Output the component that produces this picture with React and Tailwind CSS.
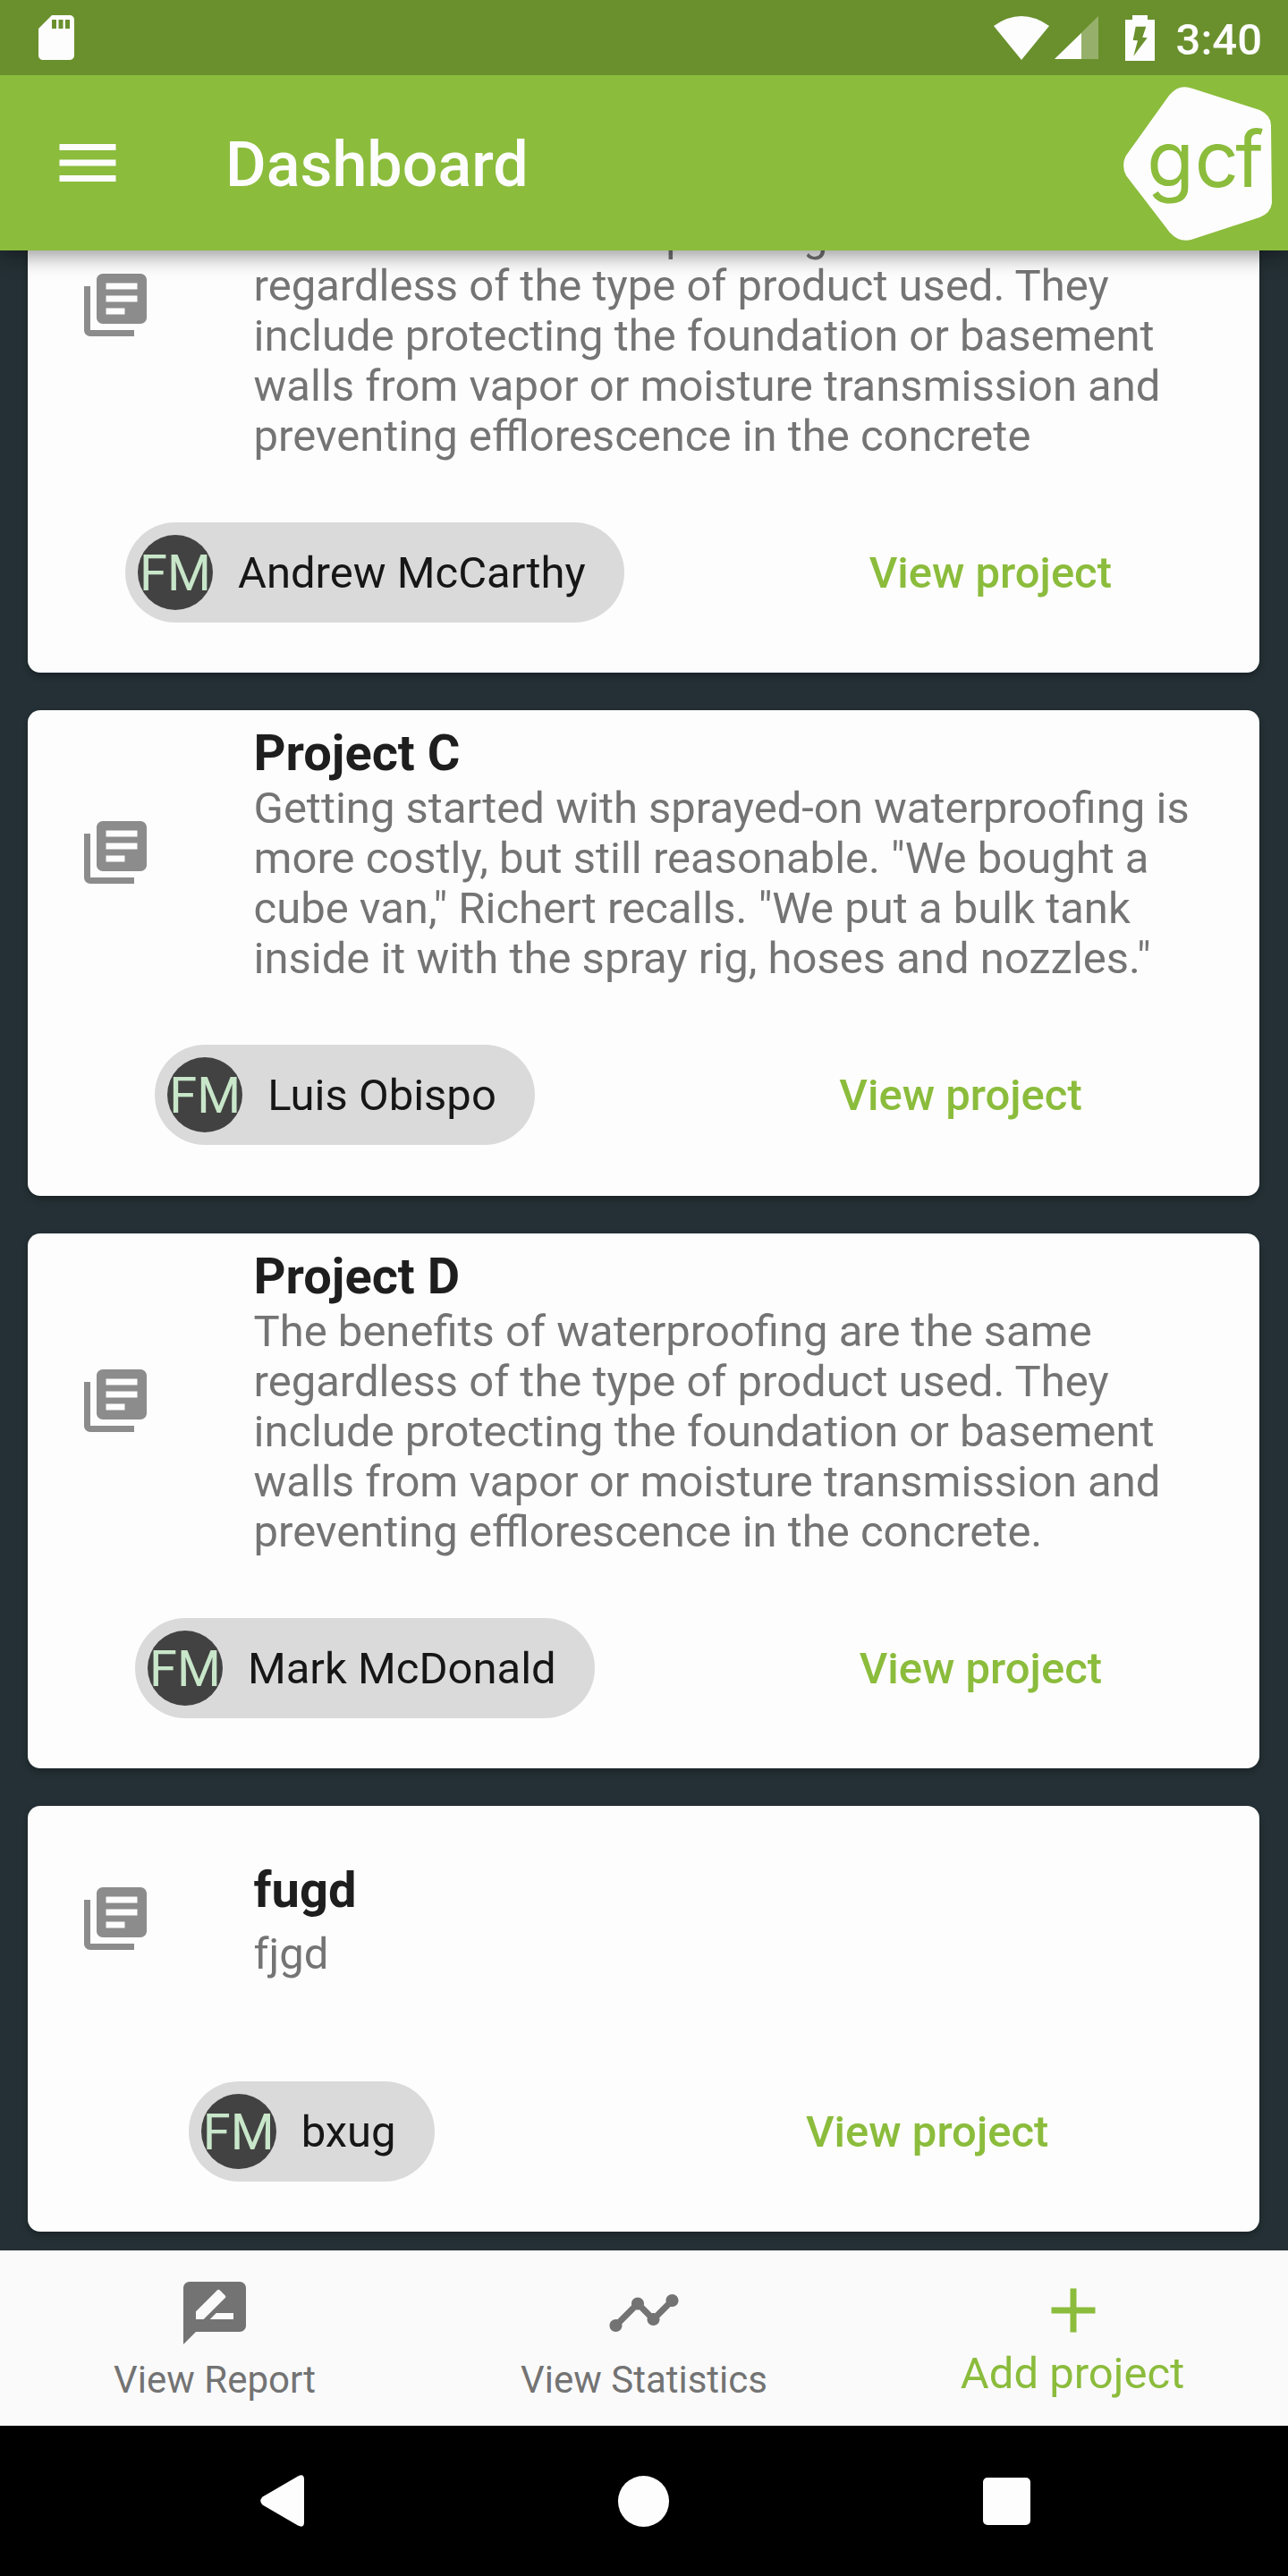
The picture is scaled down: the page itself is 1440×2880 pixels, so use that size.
import React from "react";
import { MdAdd, MdLibraryBooks, MdMenu, MdRateReview, MdSdCard, MdTimeline } from "react-icons/md";

const WATERPROOFING = [
  "The benefits of waterproofing are the same",
  "regardless of the type of product used. They",
  "include protecting the foundation or basement",
  "walls from vapor or moisture transmission and",
];

const projects = [
  {
    title: "",
    lines: [...WATERPROOFING, "preventing efflorescence in the concrete"],
    owner: "Andrew McCarthy",
    tile: "h-[374px] pt-[15px] gap-px",
    footer: "pb-14",
  },
  {
    title: "Project C",
    lines: [
      "Getting started with sprayed-on waterproofing is",
      "more costly, but still reasonable. \"We bought a",
      "cube van,\" Richert recalls. \"We put a bulk tank",
      "inside it with the spray rig, hoses and nozzles.\"",
    ],
    owner: "Luis Obispo",
    tile: "h-[318px] pt-[15px] gap-px",
    footer: "pb-[57px]",
  },
  {
    title: "Project D",
    lines: [...WATERPROOFING, "preventing efflorescence in the concrete."],
    owner: "Mark McDonald",
    tile: "h-[374px] pt-[15px] gap-px",
    footer: "pb-14",
  },
  {
    title: "fugd",
    lines: ["fjgd"],
    owner: "bxug",
    tile: "h-[252px] pt-[61px] gap-[11px]",
    footer: "pb-14",
  },
];

function StatusBar() {
  return (
    <div className="relative z-20 flex h-[84px] shrink-0 items-center bg-[#6a902d] pl-[33px] pr-[29px] text-[#fdfdfd]">
      <MdSdCard size={60} />
      <div className="ml-auto flex items-center">
        <svg width="62" height="49" viewBox="0 0 62 49" fill="currentColor">
          <path d="M0 11Q31-11 62 11L31 49Z" />
        </svg>
        <svg className="ml-1.5" width="49" height="48" viewBox="0 0 49 48" fill="currentColor">
          <path d="M49 0V48H0Z" opacity="0.3" />
          <path d="M30 19V48H0Z" />
        </svg>
        <svg className="ml-[30px]" width="33" height="51" viewBox="0 0 33 51" fill="currentColor">
          <path
            fillRule="evenodd"
            d="M8 0H25V5H33V51H0V5H8ZM11.7 12.7L8.7 28L14 28.3L9.3 45.7L24.7 25.3L19.3 24.7L23.3 12.7Z"
          />
        </svg>
        <span className="ml-6 pt-[5px] text-[49px] font-medium leading-[56px]">3:40</span>
      </div>
    </div>
  );
}

function Logo() {
  return (
    <svg className="ml-auto mt-[2px]" width="166" height="172.3" viewBox="528 290 498 517">
      <path
        fill="#fdfdfd"
        d="M536 522L682 318Q715 278 760 296L985 368Q1023 385 1023 420L1026 680Q1022 714 985 728L755 803Q715 813 683 778L537 588Q520 555 536 522Z"
      />
      <text x="607 767 904" y="627" fontFamily="Inter, sans-serif" fontSize="258" fill="#8bbc3c">
        gcf
      </text>
    </svg>
  );
}

function AppBar() {
  return (
    <header className="relative z-10 flex h-[196px] shrink-0 items-center bg-[#8bbc3c] pl-14 pr-[18px] text-[#fdfdfd] shadow-[0_6px_22px_rgba(0,0,0,0.4)]">
      <MdMenu size={84} />
      <h1 className="ml-28 mt-1 text-[70px] font-medium leading-[82px]">Dashboard</h1>
      <Logo />
    </header>
  );
}

function ProjectCard({ project }) {
  return (
    <article className="rounded-[14px] bg-[#fdfdfd] shadow-[0_4px_7px_rgba(0,0,0,0.25)]">
      <div className="flex">
        <div className="flex w-[252.5px] items-center pl-14">
          <MdLibraryBooks size={84} className="text-[#8c8c8c]" />
        </div>
        <div className={`flex flex-col ${project.tile}`}>
          <h2 className="h-[66px] shrink-0 text-[56px] font-bold leading-[66px] text-[#1e1e1e]">{project.title}</h2>
          <p className="text-[49px] leading-[56px] text-[#747474]">
            {project.lines.map((line) => (
              <span key={line} className="block whitespace-nowrap">
                {line}
              </span>
            ))}
          </p>
        </div>
      </div>
      <div className={`flex items-center justify-around pt-14 ${project.footer}`}>
        <div className="flex h-28 items-center rounded-full bg-[#dadada] pl-3.5 pr-[43px]">
          <span className="flex size-[84px] items-center justify-center rounded-full bg-[#424242] pt-0.5 text-[56px] leading-none text-[#c8e6c9]">
            FM
          </span>
          <span className="ml-7 pt-[2px] text-[49px] leading-[56px] text-[#161616]">{project.owner}</span>
        </div>
        <button className="px-14 pt-[2px] text-[49px] font-medium leading-[56px] text-[#8bbc3c]">View project</button>
      </div>
    </article>
  );
}

function BottomBar() {
  return (
    <nav className="relative z-10 grid h-[196px] shrink-0 grid-cols-3 bg-[#fafafb] text-[#737373]">
      <div className="flex flex-col items-center pt-7">
        <MdRateReview size={84} />
        <span className="mt-2 text-[42px] leading-[50px]">View Report</span>
      </div>
      <div className="flex flex-col items-center pt-7">
        <MdTimeline size={84} />
        <span className="mt-2 text-[42px] leading-[50px]">View Statistics</span>
      </div>
      <div className="flex flex-col items-center pt-[25px] text-[#8bbc3c]">
        <MdAdd size={84} />
        <span className="mt-px mr-[2px] text-[49px] leading-[56px]">Add project</span>
      </div>
    </nav>
  );
}

function SystemNav() {
  return (
    <div className="flex h-[168px] shrink-0 items-center justify-between bg-black pl-[291px] pr-[288px]">
      <svg width="49" height="58" viewBox="0 0 49 58" fill="#fdfdfd">
        <path d="M42 1.5Q49-2 49 5V53Q49 60 42 56.5L2.5 33.5Q-2 29 2.5 24.5Z" />
      </svg>
      <span className="size-[57px] rounded-full bg-[#fdfdfd]" />
      <span className="size-[53px] rounded-[5px] bg-[#fdfdfd]" />
    </div>
  );
}

export default function App() {
  return (
    <div className="flex h-[2880px] w-[1440px] flex-col overflow-hidden bg-[#243035] font-['Roboto',sans-serif]">
      <StatusBar />
      <AppBar />
      <main className="h-[2236px] shrink-0 overflow-hidden">
        <div className="-mt-[126px] flex flex-col gap-[42px] pl-[31px] pr-8">
          {projects.map((project) => (
            <ProjectCard key={project.owner} project={project} />
          ))}
        </div>
      </main>
      <BottomBar />
      <SystemNav />
    </div>
  );
}
